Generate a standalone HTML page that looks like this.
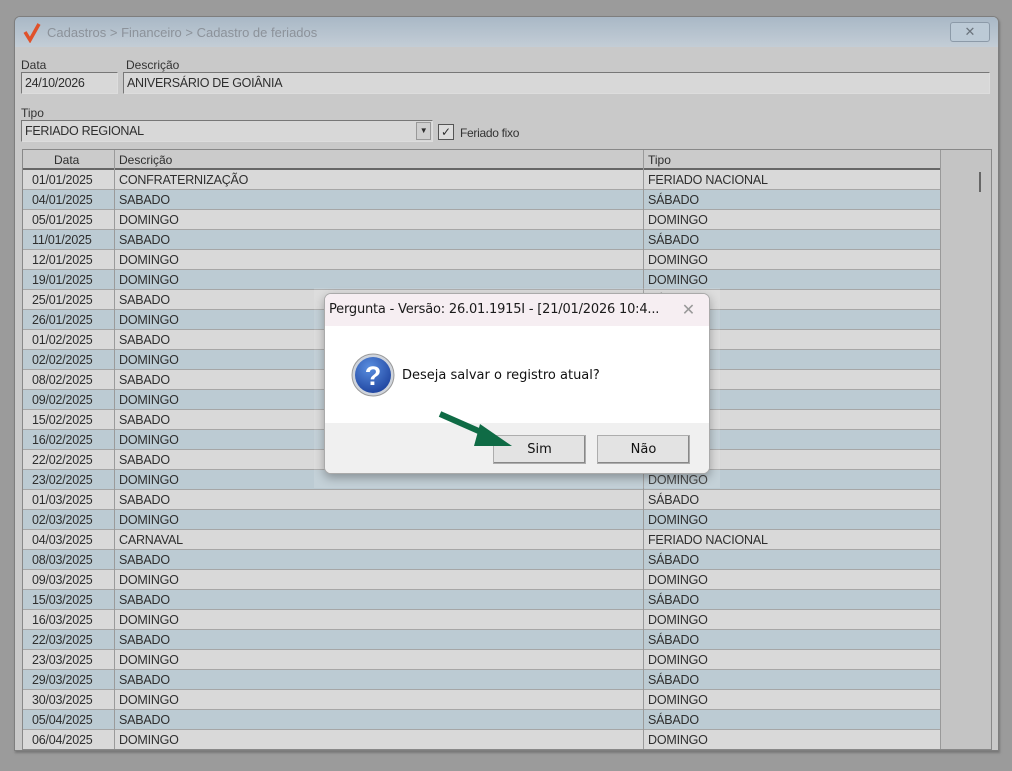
<!DOCTYPE html>
<html><head><meta charset="utf-8"><style>
*{margin:0;padding:0;box-sizing:border-box}
body{width:1012px;height:771px;background:#9b9b9b;position:relative;overflow:hidden;font-family:"Liberation Sans",sans-serif;font-size:12px;color:#2e2e2e}
.win{position:absolute;left:14px;top:16px;width:985px;height:735px;background:#c9c9c9;border:1px solid #7e7e7e;border-radius:6px 6px 0 0;box-shadow:1px 2px 2px #777}
.tb{position:absolute;left:0;top:0;right:0;height:30px;background:linear-gradient(#a9b8c6,#c3cdd6);border-radius:5px 5px 0 0}
.tb .t{position:absolute;left:32px;top:8px;color:#8c929a;font-size:13px}
.cl{position:absolute;right:8px;top:5px;width:40px;height:20px;border:1px solid #8c9aa8;border-radius:3px;background:#bccad6;text-align:center;color:#6a737c;font-size:13px;line-height:18px}
.lbl{position:absolute;font-size:12px;color:#333}
.inp{position:absolute;background:#d8d8d8;border:1px solid #777;border-right-color:#ddd;border-bottom-color:#ddd;height:22px;padding:3px 3px;font-size:12.5px;letter-spacing:-.3px}
.grid{position:absolute;left:7px;top:132px;width:970px;height:601px;border:1px solid #888;background:#c6c6c6;overflow:hidden}
.row{position:absolute;left:0;width:917px;height:20px;border-bottom:1px solid #a6a6a6;font-size:12.5px;letter-spacing:-.2px}
.row span{position:absolute;top:3px;white-space:nowrap}
.c1{left:9px}.c2{left:96px}.c3{left:625px}
.vl{position:absolute;top:0;bottom:0;width:1px;background:#9a9a9a}
.hd{position:absolute;left:0;top:0;width:917px;height:20px;background:#cbcbcb;border-bottom:2px solid #666}
.sb{position:absolute;left:917px;top:0;width:52px;bottom:0;background:#c4c4c4;border-left:1px solid #999}
.dlg{position:absolute;left:324px;top:293px;width:386px;height:181px;background:#fff;border:1px solid #aaa;border-radius:7px;overflow:hidden;box-shadow:0 4px 10px rgba(0,0,0,.3)}
.dt{height:32px;background:#f6eef2;color:#1a1a1a;padding:8px 0 0 4px;font-family:"DejaVu Sans",sans-serif;font-size:13px;letter-spacing:-.2px}
.ft{position:absolute;left:0;right:0;top:129px;bottom:0;background:#f0f0f0}
.btn{position:absolute;top:141px;width:93px;height:29px;background:#e3e3e3;border:1px solid #adadad;box-shadow:inset -1px -1px 0 #888;text-align:center;line-height:27px;font-family:"DejaVu Sans",sans-serif;font-size:13px;color:#111}
</style></head><body>
<div class="win">
 <div class="tb"><svg style="position:absolute;left:8px;top:6px" width="18" height="20"><path d="M2 9 L7 17 L16 1" stroke="#e0512a" stroke-width="3.5" fill="none"/></svg><span class="t">Cadastros &gt; Financeiro &gt; Cadastro de feriados</span><div class="cl">✕</div></div>
 <div class="lbl" style="left:6px;top:41px">Data</div>
 <div class="lbl" style="left:111px;top:41px">Descrição</div>
 <div class="inp" style="left:6px;top:55px;width:97px">24/10/2026</div>
 <div class="inp" style="left:108px;top:55px;width:867px">ANIVERSÁRIO DE GOIÂNIA</div>
 <div class="lbl" style="left:6px;top:89px">Tipo</div>
 <div class="inp" style="left:6px;top:103px;width:412px">FERIADO REGIONAL<div style="position:absolute;right:1px;top:1px;width:15px;height:18px;background:#cfcfcf;border:1px solid #999;font-size:8px;text-align:center;line-height:16px">▼</div></div>
 <div style="position:absolute;left:423px;top:107px;width:16px;height:16px;border:1px solid #555;background:#ddd;font-size:12px;line-height:14px;text-align:center">✓</div>
 <div class="lbl" style="left:445px;top:109px;letter-spacing:-.3px">Feriado fixo</div>
 <div class="grid" id="g">
  <div class="hd"><span style="position:absolute;left:31px;top:3px">Data</span><span style="position:absolute;left:96px;top:3px">Descrição</span><span style="position:absolute;left:625px;top:3px">Tipo</span></div>
  <div class="sb"><div style="position:absolute;left:38px;top:22px;width:2px;height:20px;background:#666"></div></div>
 </div>
</div>
<div style="position:absolute;left:314px;top:288px;width:406px;height:200px;background:rgba(255,255,255,.12)"></div>
<div class="dlg">
 <div class="dt">Pergunta - Versão: 26.01.1915I - [21/01/2026 10:4...<span style="position:absolute;right:14px;top:6px;color:#999;font-size:16px">✕</span></div>
 <svg style="position:absolute;left:25px;top:58px" width="46" height="46"><defs><radialGradient id="r" cx=".4" cy=".3" r=".8"><stop offset="0" stop-color="#5a8fe0"/><stop offset="1" stop-color="#1a3e9a"/></radialGradient></defs><circle cx="23" cy="23" r="21" fill="#cfd4dc" stroke="#999"/><circle cx="23" cy="23" r="18" fill="url(#r)"/><text x="23" y="33" text-anchor="middle" font-family="Liberation Sans" font-weight="bold" font-size="27" fill="#fff">?</text></svg>
 <div style="position:absolute;left:77px;top:74px;font-family:'DejaVu Sans',sans-serif;font-size:13px;color:#111">Deseja salvar o registro atual?</div>
 <div class="ft"></div>
 <div class="btn" style="left:168px">Sim</div>
 <div class="btn" style="left:272px">Não</div>
</div>
<svg style="position:absolute;left:438px;top:408px" width="80" height="45"><path d="M2 6 L52 28" stroke="#0f6b45" stroke-width="6"/><path d="M42 16 L74 38 L36 38 Z" fill="#0f6b45"/></svg>
<script>
var d=[["01/01/2025","CONFRATERNIZAÇÃO","FERIADO NACIONAL"],["04/01/2025","SABADO","SÁBADO"],["05/01/2025","DOMINGO","DOMINGO"],["11/01/2025","SABADO","SÁBADO"],["12/01/2025","DOMINGO","DOMINGO"],["19/01/2025","DOMINGO","DOMINGO"],["25/01/2025","SABADO","SÁBADO"],["26/01/2025","DOMINGO","DOMINGO"],["01/02/2025","SABADO","SÁBADO"],["02/02/2025","DOMINGO","DOMINGO"],["08/02/2025","SABADO","SÁBADO"],["09/02/2025","DOMINGO","DOMINGO"],["15/02/2025","SABADO","SÁBADO"],["16/02/2025","DOMINGO","DOMINGO"],["22/02/2025","SABADO","SÁBADO"],["23/02/2025","DOMINGO","DOMINGO"],["01/03/2025","SABADO","SÁBADO"],["02/03/2025","DOMINGO","DOMINGO"],["04/03/2025","CARNAVAL","FERIADO NACIONAL"],["08/03/2025","SABADO","SÁBADO"],["09/03/2025","DOMINGO","DOMINGO"],["15/03/2025","SABADO","SÁBADO"],["16/03/2025","DOMINGO","DOMINGO"],["22/03/2025","SABADO","SÁBADO"],["23/03/2025","DOMINGO","DOMINGO"],["29/03/2025","SABADO","SÁBADO"],["30/03/2025","DOMINGO","DOMINGO"],["05/04/2025","SABADO","SÁBADO"],["06/04/2025","DOMINGO","DOMINGO"]];
var g=document.getElementById('g'),h='';
d.forEach(function(r,i){h+='<div class="row" style="top:'+(20+i*20)+'px;background:'+(i%2?'#bccbd3':'#d9d9d9')+'"><span class="c1">'+r[0]+'</span><span class="c2">'+r[1]+'</span><span class="c3">'+r[2]+'</span></div>';});
h+='<div class="vl" style="left:91px"></div><div class="vl" style="left:620px"></div>';
g.insertAdjacentHTML('beforeend',h);
</script>
</body></html>
